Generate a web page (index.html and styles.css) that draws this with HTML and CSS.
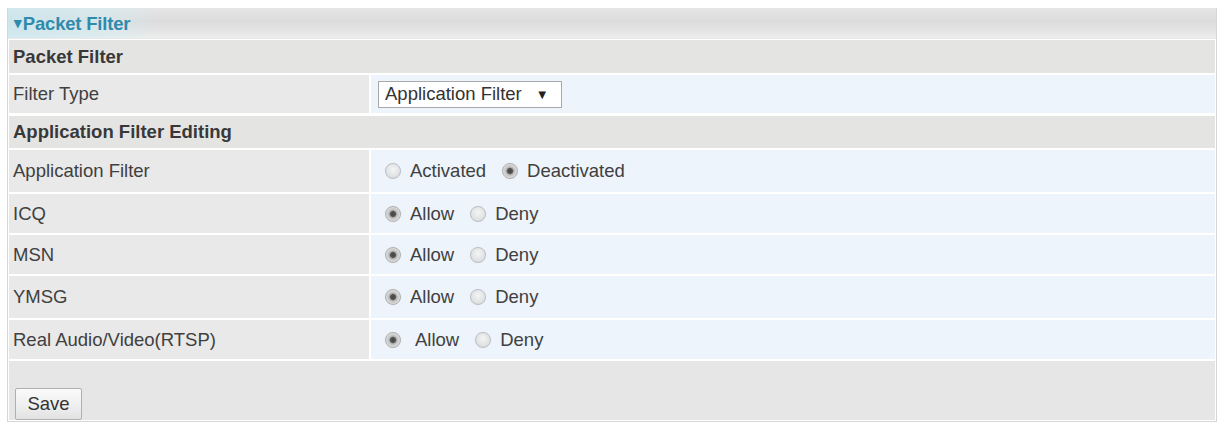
FILE: index.html
```html
<!DOCTYPE html>
<html>
<head>
<meta charset="utf-8">
<link rel="stylesheet" href="styles.css">
</head>
<body>
<div class="panel">
  <div class="panel-head"><span class="caret">&#9662;</span>Packet Filter</div>
  <div class="form">
    <div class="sec">Packet Filter</div>

    <div class="lbl r-ft">Filter Type</div>
    <div class="val r-ft">
      <div class="select"><span>Application Filter</span><span class="arrow">&#9660;</span></div>
    </div>

    <div class="sec r-sec2">Application Filter Editing</div>

    <div class="lbl r-af">Application Filter</div>
    <div class="val r-af">
      <span class="radio"></span><span class="opt">Activated</span>
      <span class="radio on"></span><span class="opt">Deactivated</span>
    </div>

    <div class="lbl r-std">ICQ</div>
    <div class="val r-std">
      <span class="radio on"></span><span class="opt">Allow</span>
      <span class="radio"></span><span class="opt">Deny</span>
    </div>

    <div class="lbl r-std">MSN</div>
    <div class="val r-std">
      <span class="radio on"></span><span class="opt">Allow</span>
      <span class="radio"></span><span class="opt">Deny</span>
    </div>

    <div class="lbl r-tall">YMSG</div>
    <div class="val r-tall">
      <span class="radio on"></span><span class="opt">Allow</span>
      <span class="radio"></span><span class="opt">Deny</span>
    </div>

    <div class="lbl r-std">Real Audio/Video(RTSP)</div>
    <div class="val r-std wide">
      <span class="radio on"></span><span class="opt">Allow</span>
      <span class="radio"></span><span class="opt">Deny</span>
    </div>

    <div class="foot"><button class="btn">Save</button></div>
  </div>
</div>
</body>
</html>
```

FILE: styles.css
```css
html, body {
  margin: 0;
  padding: 0;
  background: #ffffff;
}
body {
  font-family: "Liberation Sans", Arial, sans-serif;
  font-size: 18.5px;
  color: #404040;
}
.panel {
  margin: 8px 3px 0 7px;
  border: 1px solid #d6d6d6;
  border-top: none;
  background: #ffffff;
  padding: 0 1px 1px 1px;
}
.panel-head {
  height: 30px;
  line-height: 30px;
  margin: 0 -1px;
  padding-left: 6px;
  font-weight: bold;
  color: #2f8bac;
  background:
    linear-gradient(90deg, rgba(200,232,240,0.75) 0px, rgba(210,236,242,0.5) 100px, rgba(255,255,255,0) 150px),
    linear-gradient(180deg, #e6e6e6 0%, #dcdcdc 45%, #e6e6e6 80%, #eeeeee 100%);
  border-bottom: 1px solid #e9e9e9;
  letter-spacing: -0.2px;
}
.caret {
  font-size: 15px;
  vertical-align: 2px;
  margin-right: 1px;
}
.form {
  display: grid;
  grid-template-columns: 360px 1fr;
  column-gap: 2px;
  row-gap: 2px;
  padding-top: 1px;
}
.sec {
  grid-column: 1 / 3;
  height: 33px;
  line-height: 33px;
  padding-left: 4px;
  font-weight: bold;
  background: #e4e4e3;
  color: #383838;
}
.r-sec2 {
  height: 32px;
  line-height: 32px;
  margin-top: 1px;
}
.lbl {
  display: flex;
  align-items: center;
  padding-left: 4px;
  background: #e9e9e9;
}
.val {
  display: flex;
  align-items: center;
  padding-left: 14px;
  background: #edf4fc;
}
.r-ft { height: 38px; }
.r-af { height: 42px; }
.r-std { height: 39px; }
.r-tall { height: 42px; }
.select {
  display: flex;
  align-items: center;
  width: 176px;
  height: 25px;
  margin-left: -7px;
  padding-left: 6px;
  border: 1px solid #a9a9a9;
  background: #ffffff;
  color: #333333;
}
.arrow {
  font-size: 13px;
  margin-left: 14px;
  color: #222;
}
.radio {
  display: inline-block;
  width: 14px;
  height: 14px;
  border-radius: 50%;
  border: 1px solid #bcc0c4;
  background: radial-gradient(circle at 50% 40%, #f4f4f4 0%, #dfe1e3 65%, #cdd0d3 100%);
  box-shadow: 0 0 1px #d8dadc;
  margin-right: 9px;
  flex: none;
}
.radio.on {
  background: radial-gradient(circle at 50% 50%, #444 0px, #555 2.5px, #b8b8b8 3.8px, #d6d6d6 6px, #e4e4e4 100%);
  border-color: #b0b0b0;
}
.opt {
  margin-right: 16px;
}
.wide .radio.on + .opt { margin-left: 5px; }
.foot {
  grid-column: 1 / 3;
  height: 59px;
  background: #e6e6e6;
  display: flex;
  align-items: flex-end;
  padding-left: 6px;
}
.btn {
  font-family: "Liberation Sans", Arial, sans-serif;
  font-size: 18.5px;
  color: #333;
  width: 67px;
  height: 32px;
  border: 1px solid #b0b0b0;
  border-radius: 2px;
  background: linear-gradient(180deg, #fafafa 0%, #eeeeee 60%, #e2e2e2 100%);
  padding: 0;
}
```
